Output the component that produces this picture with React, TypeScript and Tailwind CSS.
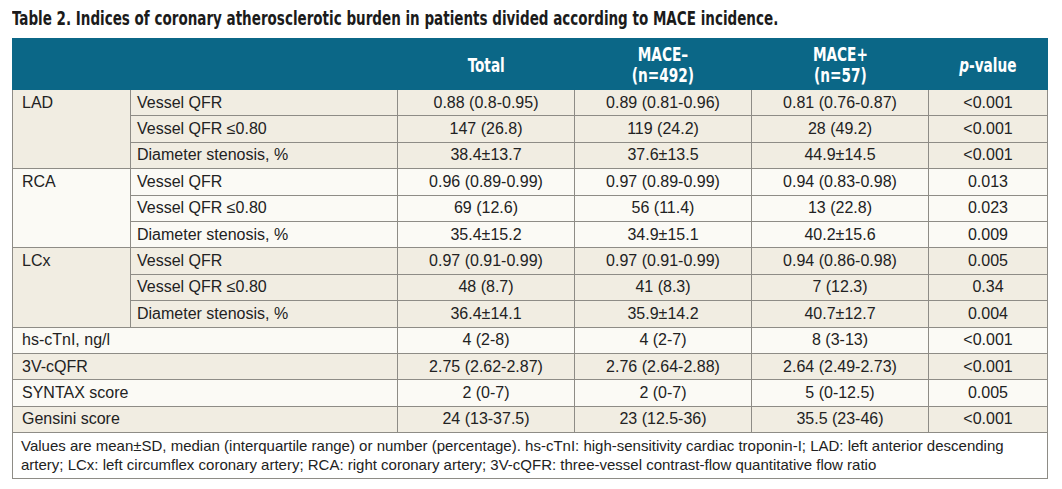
import React from 'react';

type Row = { sub: string; total: string; minus: string; plus: string; p: string };
type Group = { label: string; bg: string; rows: Row[] };

const BEIGE = 'bg-[#f1ede2]';
const LIGHT = 'bg-[#fbfaf5]';

const groups: Group[] = [
  {
    label: 'LAD',
    bg: BEIGE,
    rows: [
      { sub: 'Vessel QFR', total: '0.88 (0.8-0.95)', minus: '0.89 (0.81-0.96)', plus: '0.81 (0.76-0.87)', p: '<0.001' },
      { sub: 'Vessel QFR ≤0.80', total: '147 (26.8)', minus: '119 (24.2)', plus: '28 (49.2)', p: '<0.001' },
      { sub: 'Diameter stenosis, %', total: '38.4±13.7', minus: '37.6±13.5', plus: '44.9±14.5', p: '<0.001' },
    ],
  },
  {
    label: 'RCA',
    bg: LIGHT,
    rows: [
      { sub: 'Vessel QFR', total: '0.96 (0.89-0.99)', minus: '0.97 (0.89-0.99)', plus: '0.94 (0.83-0.98)', p: '0.013' },
      { sub: 'Vessel QFR ≤0.80', total: '69 (12.6)', minus: '56 (11.4)', plus: '13 (22.8)', p: '0.023' },
      { sub: 'Diameter stenosis, %', total: '35.4±15.2', minus: '34.9±15.1', plus: '40.2±15.6', p: '0.009' },
    ],
  },
  {
    label: 'LCx',
    bg: BEIGE,
    rows: [
      { sub: 'Vessel QFR', total: '0.97 (0.91-0.99)', minus: '0.97 (0.91-0.99)', plus: '0.94 (0.86-0.98)', p: '0.005' },
      { sub: 'Vessel QFR ≤0.80', total: '48 (8.7)', minus: '41 (8.3)', plus: '7 (12.3)', p: '0.34' },
      { sub: 'Diameter stenosis, %', total: '36.4±14.1', minus: '35.9±14.2', plus: '40.7±12.7', p: '0.004' },
    ],
  },
];

const singles = [
  { label: 'hs-cTnI, ng/l', total: '4 (2-8)', minus: '4 (2-7)', plus: '8 (3-13)', p: '<0.001', bg: LIGHT },
  { label: '3V-cQFR', total: '2.75 (2.62-2.87)', minus: '2.76 (2.64-2.88)', plus: '2.64 (2.49-2.73)', p: '<0.001', bg: BEIGE },
  { label: 'SYNTAX score', total: '2 (0-7)', minus: '2 (0-7)', plus: '5 (0-12.5)', p: '0.005', bg: LIGHT },
  { label: 'Gensini score', total: '24 (13-37.5)', minus: '23 (12.5-36)', plus: '35.5 (23-46)', p: '<0.001', bg: BEIGE },
];

const cell = 'border border-[#8e8c86] h-[26.4px] p-0 align-middle';
// condensed bold: DejaVu Sans Condensed squeezed a bit further
const head = "font-['DejaVu_Sans_Condensed','DejaVu_Sans',sans-serif] font-bold";
const th = 'border border-[#0b6787] border-l-[#6aaac4] pt-[2px]';

function Values({ r }: { r: { total: string; minus: string; plus: string; p: string } }) {
  return (
    <>
      <td className={`${cell} text-center`}>{r.total}</td>
      <td className={`${cell} text-center`}>{r.minus}</td>
      <td className={`${cell} text-center`}>{r.plus}</td>
      <td className={`${cell} text-center`}>{r.p}</td>
    </>
  );
}

function Squeeze({ children }: { children: React.ReactNode }) {
  return <span className="inline-block scale-x-[0.8]">{children}</span>;
}

export default function App() {
  return (
    <div className="w-[1062px] h-[489px] bg-white font-['Liberation_Sans',Arial,sans-serif] text-[#222]">
      <div className="pl-3 pt-[7px] h-[38px]">
        <h1 className={`${head} inline-block origin-left scale-x-[0.79] whitespace-nowrap text-[19px] leading-[22px] text-[#1b1b1b]`}>
          Table 2. Indices of coronary atherosclerotic burden in patients divided according to MACE incidence.
        </h1>
      </div>
      <table className="ml-3 w-[1035px] border-collapse table-fixed text-[16px] leading-[20px]">
        <colgroup>
          <col className="w-[118px]" />
          <col className="w-[267px]" />
          <col className="w-[177px]" />
          <col className="w-[177px]" />
          <col className="w-[177px]" />
          <col className="w-[119px]" />
        </colgroup>
        <thead>
          <tr className={`${head} bg-[#0b6787] text-white text-[19px] leading-[21px] h-[51px]`}>
            <th colSpan={2} className="border border-[#0b6787]" />
            <th className={th}>
              <Squeeze>Total</Squeeze>
            </th>
            <th className={th}>
              <Squeeze>
                MACE–
                <br />
                (n=492)
              </Squeeze>
            </th>
            <th className={th}>
              <Squeeze>
                MACE+
                <br />
                (n=57)
              </Squeeze>
            </th>
            <th className={th}>
              <Squeeze>
                <i>p</i>-value
              </Squeeze>
            </th>
          </tr>
        </thead>
        <tbody>
          {groups.map((g) =>
            g.rows.map((r, i) => (
              <tr key={g.label + i} className={g.bg}>
                {i === 0 && (
                  <td rowSpan={3} className="border border-[#8e8c86] p-0 align-top pl-[9px]">
                    <div className="h-[26px] flex items-center">{g.label}</div>
                  </td>
                )}
                <td className={`${cell} pl-[6px]`}>{r.sub}</td>
                <Values r={r} />
              </tr>
            ))
          )}
          {singles.map((s) => (
            <tr key={s.label} className={s.bg}>
              <td colSpan={2} className={`${cell} pl-[9px]`}>
                {s.label}
              </td>
              <Values r={s} />
            </tr>
          ))}
          <tr className="bg-white">
            <td colSpan={6} className="border border-[#8e8c86] px-[8px] pt-[3px] pb-[4px] text-[15px] leading-[19px]">
              Values are mean±SD, median (interquartile range) or number (percentage). hs-cTnI: high-sensitivity cardiac
              troponin-I; LAD: left anterior descending artery; LCx: left circumflex coronary artery; RCA: right coronary
              artery; 3V-cQFR: three-vessel contrast-flow quantitative flow ratio
            </td>
          </tr>
        </tbody>
      </table>
    </div>
  );
}
